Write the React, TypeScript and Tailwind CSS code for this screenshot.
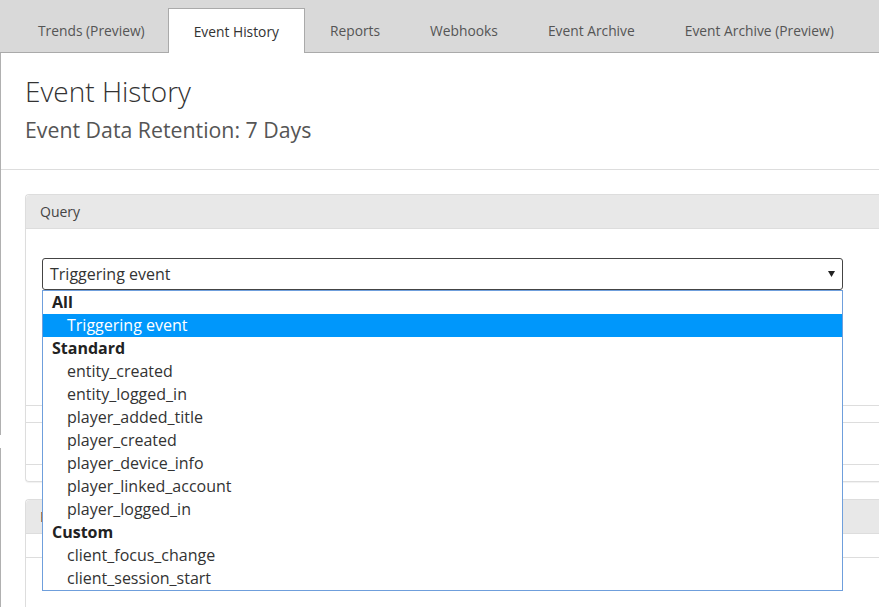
import React from "react";

const tabs = [
  "Trends (Preview)",
  "Event History",
  "Reports",
  "Webhooks",
  "Event Archive",
  "Event Archive (Preview)",
];

type Row = { label: string; group?: boolean; selected?: boolean };

const rows: Row[] = [
  { label: "All", group: true },
  { label: "Triggering event", selected: true },
  { label: "Standard", group: true },
  { label: "entity_created" },
  { label: "entity_logged_in" },
  { label: "player_added_title" },
  { label: "player_created" },
  { label: "player_device_info" },
  { label: "player_linked_account" },
  { label: "player_logged_in" },
  { label: "Custom", group: true },
  { label: "client_focus_change" },
  { label: "client_session_start" },
];

export default function App() {
  return (
    <div className="relative w-[879px] h-[607px] overflow-hidden bg-white font-['Open_Sans',sans-serif] text-[#333]">
      {/* Tab bar */}
      <div className="flex items-end h-[53px] bg-[#d9d9d9] border-b border-[#aaaaaa] pl-[13px]">
        {tabs.map((t, i) => {
          const active = t === "Event History";
          return (
            <div
              key={t}
              className={
                active
                  ? "relative -mb-px h-[45px] flex items-center pt-[2px] px-[25px] bg-white border border-b-0 border-[#aaaaaa] text-[13.8px] text-[#333]"
                  : i === 0
                  ? "h-[44px] flex items-center pt-[2px] pl-[25px] pr-[23px] text-[13.8px] text-[#555]"
                  : "h-[44px] flex items-center pt-[2px] px-[25px] text-[13.8px] text-[#555]"
              }
            >
              {t}
            </div>
          );
        })}
      </div>

      {/* Main */}
      <div className="h-[554px] border-l border-[#b0b0b0]">
        <div className="px-[24px] pt-[23px] h-[117px] border-b border-[#dddddd]">
          <h1 className="text-[28px] leading-[31px] font-light text-[#333]">Event History</h1>
          <h2 className="mt-[10px] text-[21.3px] leading-[26px] text-[#555]">
            Event Data Retention: 7 Days
          </h2>
        </div>

        <div className="pl-[24px] pt-[24px]">
          {/* Query panel */}
          <div className="relative border border-r-0 border-[#dddddd] rounded-l-[4px] shadow-[0_1px_1px_rgba(0,0,0,0.06)]">
            <div className="h-[34px] bg-[#e8e8e8] border-b border-[#dddddd] rounded-tl-[4px] flex items-center pl-[14px] text-[14px] text-[#444]">
              Query
            </div>
            <div className="pt-[29px] pl-[16px] pb-[16px]">
              <div className="relative w-[801px]">
                <div className="h-[32px] border border-[#444] rounded-[3px] flex items-center justify-between pl-[7px] pr-[7px] text-[16px] text-[#333]">
                  <span>Triggering event</span>
                  <svg width="7" height="6" viewBox="0 0 7 6">
                    <path d="M0 0 H7 L3.5 6 Z" fill="#222" />
                  </svg>
                </div>
                {/* Dropdown list */}
                <div className="absolute left-0 top-[32px] z-10 w-[801px] bg-white border border-[#6f9fdc]">
                  {rows.map((r) => (
                    <div
                      key={r.label}
                      className={
                        r.selected
                          ? "h-[23px] leading-[23px] pl-[24px] text-[16px] bg-[#0097fb] text-white"
                          : r.group
                          ? "h-[23px] leading-[23px] pl-[9px] text-[16px] font-bold text-[#222]"
                          : "h-[23px] leading-[23px] pl-[24px] text-[16px] text-[#333]"
                      }
                    >
                      {r.label}
                    </div>
                  ))}
                </div>
              </div>
              <div className="mt-[115px] h-[18px] border-y border-[#dddddd] -ml-[16px]" />
              <div className="mt-[41px] border-t border-[#dddddd] -ml-[16px]" />
            </div>
          </div>

          {/* Second panel */}
          <div className="mt-[17px] border border-r-0 border-[#dddddd] rounded-tl-[4px]">
            <div className="h-[34px] bg-[#e8e8e8] border-b border-[#dddddd] rounded-tl-[4px] flex items-center pl-[14px] text-[14px] text-[#444]">
              Results
            </div>
            <div className="h-[24px] border-b border-[#dddddd]" />
            <div className="h-[60px]" />
          </div>
        </div>
      </div>

      {/* small break in the left edge */}
      <div className="absolute left-0 top-[435px] w-[2px] h-[13px] bg-white" />
    </div>
  );
}
